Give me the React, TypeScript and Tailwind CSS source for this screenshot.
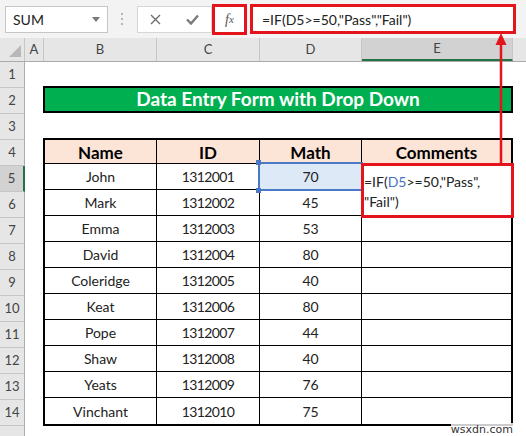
import React from "react";

const STUDENTS = [
  { name: "John", id: "1312001", math: 70 },
  { name: "Mark", id: "1312002", math: 45 },
  { name: "Emma", id: "1312003", math: 53 },
  { name: "David", id: "1312004", math: 80 },
  { name: "Coleridge", id: "1312005", math: 40 },
  { name: "Keat", id: "1312006", math: 80 },
  { name: "Pope", id: "1312007", math: 44 },
  { name: "Shaw", id: "1312008", math: 40 },
  { name: "Yeats", id: "1312009", math: 76 },
  { name: "Vinchant", id: "1312010", math: 75 },
];

const COLUMNS = [
  { label: "A", w: "w-[19px]" },
  { label: "B", w: "w-[113px]" },
  { label: "C", w: "w-[103px]" },
  { label: "D", w: "w-[102px]" },
  { label: "E", w: "w-[151px]" },
];

function FormulaBar() {
  return (
    <div className="flex h-[38px] items-center bg-[#f3f3f3]">
      {/* name box */}
      <div className="ml-[5px] flex h-[27px] w-[103px] items-center justify-between border border-[#c6c6c6] bg-white pl-[7px] pr-[7px] text-[14px] text-[#222]">
        <span>SUM</span>
        <svg width="8" height="5" viewBox="0 0 8 5">
          <path d="M0 0h8L4 5z" fill="#7a7a7a" />
        </svg>
      </div>
      {/* grip dots */}
      <div className="ml-[13px] mr-[14px] flex w-[2px] flex-col gap-[3px]">
        <span className="h-[2px] w-[2px] bg-[#b5b5b5]" />
        <span className="h-[2px] w-[2px] bg-[#b5b5b5]" />
        <span className="h-[2px] w-[2px] bg-[#b5b5b5]" />
      </div>
      {/* cancel / enter */}
      <div className="flex h-[27px] w-[75px] items-center justify-around border border-[#d6d6d6] bg-white">
        <svg width="11" height="11" viewBox="0 0 11 11">
          <path d="M1 1l9 9M10 1l-9 9" stroke="#6e6e6e" strokeWidth="1.4" />
        </svg>
        <svg width="13" height="11" viewBox="0 0 13 11">
          <path d="M1 5.5l4 4L12 1.5" stroke="#7a7a7a" strokeWidth="2.4" fill="none" />
        </svg>
      </div>
      {/* fx */}
      <div className="flex h-[31px] w-[35px] items-center justify-center border-[3px] border-[#e3141c] bg-white font-['Liberation_Serif',serif] text-[14px] italic text-[#555]">
        f<span className="text-[11px]">x</span>
      </div>
      {/* formula input */}
      <div className="ml-[3px] flex h-[30px] w-[266px] items-center border-[3px] border-[#e3141c] bg-white pl-[9px] text-[14px] text-[#222]">
        =IF(D5&gt;=50,"Pass","Fail")
      </div>
    </div>
  );
}

function ColumnHeaders() {
  return (
    <div className="flex h-[24px] border-b border-[#ababab] bg-[#e6e6e6] text-[13px] text-[#444]">
      <div className="flex w-[25px] items-end justify-end border-r border-[#c6c6c6] pb-[4px] pr-[3px]">
        <svg width="12" height="12" viewBox="0 0 12 12">
          <path d="M12 0v12H0z" fill="#b8b8b8" />
        </svg>
      </div>
      {COLUMNS.map((c) => (
        <div
          key={c.label}
          className={
            c.label === "E"
              ? `${c.w} flex items-center justify-center border-r border-b-2 border-r-[#c6c6c6] border-b-[#217346] bg-[#d2d2d2]`
              : `${c.w} flex items-center justify-center border-r border-[#c6c6c6]`
          }
        >
          {c.label}
        </div>
      ))}
      <div className="flex-1" />
    </div>
  );
}

function RowHeaders() {
  return (
    <div className="flex w-[25px] shrink-0 flex-col text-[13px] text-[#444]">
      {Array.from({ length: 15 }, (_, i) => i + 1).map((n) => (
        <div
          key={n}
          className={
            n === 5
              ? "flex h-[26px] shrink-0 items-center justify-center border-b border-r-2 border-b-[#c6c6c6] border-r-[#217346] bg-[#d2d2d2]"
              : "flex h-[26px] shrink-0 items-center justify-center border-b border-r border-b-[#c6c6c6] border-r-[#ababab] bg-[#e6e6e6]"
          }
        >
          {/* row 15 is cut off by the window, its number doesn't show */}
          {n < 15 ? n : null}
        </div>
      ))}
    </div>
  );
}

function DataTable() {
  return (
    <div className="mt-[25px] w-[470px] border-2 border-black">
      <div className="grid h-[24px] grid-cols-[112px_103px_102px_1fr] border-b border-black bg-[#fce4d6] text-[17px] font-bold text-black">
        <div className="flex items-center justify-center border-r border-black">Name</div>
        <div className="flex items-center justify-center border-r border-black">ID</div>
        <div className="flex items-center justify-center border-r border-black">Math</div>
        <div className="flex items-center justify-center">Comments</div>
      </div>
      {STUDENTS.map((s, i) => (
        <div
          key={s.id}
          className={
            i === STUDENTS.length - 1
              ? "grid h-[26px] grid-cols-[112px_103px_102px_1fr] text-[14px] text-[#222]"
              : "grid h-[26px] grid-cols-[112px_103px_102px_1fr] border-b border-black text-[14px] text-[#222]"
          }
        >
          <div className="flex items-center justify-center border-r border-black">{s.name}</div>
          <div className="flex items-center justify-center border-r border-black tracking-[-0.6px]">{s.id}</div>
          {i === 0 ? (
            <div className="relative flex items-center justify-center border-r border-black bg-[#dde9f6]">
              {s.math}
              {/* reference highlight */}
              <span className="absolute -bottom-[2px] -left-[2px] -right-[2px] -top-[2px] border-2 border-[#4a78c4]" />
              <span className="absolute -left-[4px] -top-[4px] h-[5px] w-[5px] bg-[#4a78c4]" />
              <span className="absolute -bottom-[4px] -left-[4px] h-[5px] w-[5px] bg-[#4a78c4]" />
            </div>
          ) : (
            <div className="flex items-center justify-center border-r border-black">{s.math}</div>
          )}
          <div />
        </div>
      ))}
    </div>
  );
}

export default function App() {
  return (
    <div className="relative h-[436px] w-[526px] overflow-hidden bg-white font-['Lato',sans-serif]">
      <FormulaBar />
      <ColumnHeaders />
      <div className="flex">
        <RowHeaders />
        <div className="flex-1 pl-[18px]">
          <div className="mt-[24px] flex h-[27px] w-[470px] items-center justify-center border-2 border-black bg-[#00b050] text-[19px] font-bold text-white">
            Data Entry Form with Drop Down
          </div>
          <DataTable />
        </div>
      </div>

      {/* in-cell edit of E5 */}
      <div className="absolute left-[361px] top-[163px] h-[55px] w-[153px] border-[3px] border-[#e3141c] bg-white pt-[6px] text-[14px] leading-[20px] text-[#222]">
        <div>
          =IF(<span className="text-[#4472c4]">D5</span>&gt;=50,"Pass",
        </div>
        <div>"Fail")</div>
      </div>

      {/* arrow from cell to formula bar */}
      <svg className="absolute left-[495px] top-[33px]" width="12" height="131" viewBox="0 0 12 131">
        <path d="M6 0L0.5 12h11z" fill="#e3141c" />
        <path d="M6 10v121" stroke="#e3141c" strokeWidth="2.5" />
      </svg>

      <div className="absolute bottom-0 right-[13px] bg-white/80 font-['DejaVu_Sans',sans-serif] text-[11px] leading-[13px] text-[#333]">
        wsxdn.com
      </div>
    </div>
  );
}
